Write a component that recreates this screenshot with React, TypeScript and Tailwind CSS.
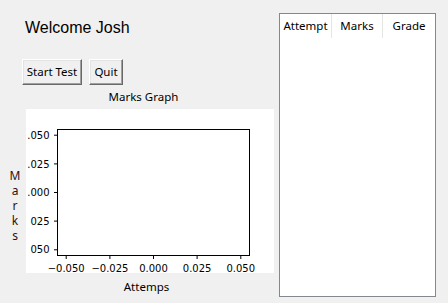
import React from "react";

const ui = { fontFamily: '"Noto Sans", "Open Sans", sans-serif' };

function TkButton({ label, w }: { label: string; w: string }) {
  return (
    <div
      className={`${w} h-[26px] flex items-center justify-center text-[11.5px] leading-[14px] text-black bg-[#f0f0f0] border border-t-white border-l-white border-r-[#696969] border-b-[#696969] shadow-[inset_-1px_-1px_0_#a0a0a0,inset_1px_1px_0_#e3e3e3]`}
      style={ui}
    >
      {label}
    </div>
  );
}

function Chart() {
  const yTicks: [number, string][] = [
    [26.2, ".050"],
    [54.9, ".025"],
    [83.5, ".000"],
    [112.1, "025"],
    [140.8, "050"],
  ];
  const xTicks: [number, string][] = [
    [40.2, "\u22120.050"],
    [83.9, "\u22120.025"],
    [127.5, "0.000"],
    [171.1, "0.025"],
    [214.8, "0.050"],
  ];
  return (
    <svg width="248" height="164" viewBox="0 0 248 164" className="block bg-white">
      <rect x="31.5" y="20.5" width="192" height="126" fill="white" stroke="black" strokeWidth="1" />
      {yTicks.map(([y, t]) => (
        <g key={t}>
          <line x1="28" x2="31.5" y1={y} y2={y} stroke="black" strokeWidth="1" />
          <text
            x="23.5"
            y={y + 3.6}
            textAnchor="end"
            fontSize="10"
            fontFamily='"DejaVu Sans", sans-serif'
            fill="black"
          >
            {t}
          </text>
        </g>
      ))}
      {xTicks.map(([x, t]) => (
        <g key={t}>
          <line x1={x} x2={x} y1="146.5" y2="150" stroke="black" strokeWidth="1" />
          <text
            x={x}
            y="162.5"
            textAnchor="middle"
            fontSize="10"
            fontFamily='"DejaVu Sans", sans-serif'
            fill="black"
          >
            {t}
          </text>
        </g>
      ))}
    </svg>
  );
}

export default function App() {
  return (
    <div className="w-[448px] h-[303px] bg-[#f0f0f0] flex overflow-hidden text-black">
      <div className="w-[279px] flex flex-col shrink-0">
        <div
          className="pt-[19px] pl-[25px] text-[16px] leading-[18px]"
          style={{ fontFamily: '"Liberation Sans", Arial, sans-serif' }}
        >
          Welcome Josh
        </div>
        <div className="mt-[22px] pl-[22px] flex gap-[7px]">
          <TkButton label="Start Test" w="w-[60px]" />
          <TkButton label="Quit" w="w-[34px]" />
        </div>
        <div className="mt-[5px] w-[287px] text-center text-[11.5px] leading-[14px]" style={ui}>
          Marks Graph
        </div>
        <div className="mt-[5px] flex">
          <div className="w-[26px] pt-[59px] pl-[4px]">
            <div
              className="text-center text-[12px] leading-[15px] text-[#2a1020]"
              style={ui}
            >
              M<br />a<br />r<br />k<br />s
            </div>
          </div>
          <Chart />
        </div>
        <div className="mt-[7px] w-[293px] text-center text-[11.5px] leading-[14px]" style={ui}>
          Attemps
        </div>
      </div>
      <div className="mt-[13px] w-[157px] h-[284px] border border-[#828790] bg-white flex flex-col">
        <div className="flex h-[24px] text-[11.5px] leading-[24px]" style={ui}>
          <div className="w-[52px] border-r border-[#e5e5e5] text-center">Attempt</div>
          <div className="w-[51px] border-r border-[#e5e5e5] text-center">Marks</div>
          <div className="flex-1 text-center">Grade</div>
        </div>
      </div>
    </div>
  );
}
